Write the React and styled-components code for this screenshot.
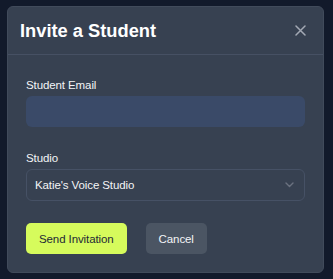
import React from "react";
import styled, { createGlobalStyle } from "styled-components";

const GlobalStyle = createGlobalStyle`
  html, body {
    margin: 0;
    padding: 0;
    background: #121a2b;
    font-family: "Liberation Sans", Arial, sans-serif;
  }
`;

const Page = styled.div`
  padding: 6px 9px 6px 7px;
`;

const Modal = styled.div`
  width: 317px;
  box-sizing: border-box;
  background: #374151;
  border: 1px solid #414b5b;
  border-radius: 6px;
  color: #f3f4f6;
`;

const Header = styled.div`
  height: 48px;
  box-sizing: border-box;
  display: flex;
  align-items: center;
  justify-content: space-between;
  padding: 0 17px 0 12px;
  border-bottom: 1px solid #465063;
`;

const Title = styled.h2`
  margin: 0;
  font-size: 18.3px;
  font-weight: 700;
  color: #ffffff;
`;

const CloseButton = styled.button`
  border: 0;
  background: none;
  padding: 0;
  width: 12px;
  height: 12px;
  display: flex;
  align-items: center;
  justify-content: center;
  cursor: pointer;
`;

const Body = styled.div`
  padding: 22px 18px 18px 18px;
`;

const Field = styled.div`
  margin-bottom: ${(p) => p.gap || 0}px;
`;

const Label = styled.label`
  display: block;
  font-size: 11.5px;
  line-height: 16px;
  color: #f3f4f6;
  margin-bottom: 3px;
  letter-spacing: -0.1px;
`;

const Input = styled.input`
  display: block;
  width: 100%;
  box-sizing: border-box;
  height: 31px;
  border: 0;
  border-radius: 6px;
  background: #3a4a68;
  color: #fff;
  outline: none;
`;

const SelectBox = styled.div`
  height: 32px;
  box-sizing: border-box;
  border: 1px solid #465165;
  border-radius: 6px;
  display: flex;
  align-items: center;
  justify-content: space-between;
  padding: 0 10px 0 8px;
  font-size: 11.5px;
  letter-spacing: -0.1px;
  color: #f3f4f6;
`;

const Actions = styled.div`
  display: flex;
  gap: 19px;
`;

const Button = styled.button`
  height: 31px;
  padding: 0 13px;
  border: 0;
  border-radius: 5px;
  font-family: inherit;
  font-size: 11.5px;
  letter-spacing: -0.1px;
  cursor: pointer;
  background: ${(p) => (p.primary ? "#d6fb5c" : "#4b5563")};
  color: ${(p) => (p.primary ? "#1f2937" : "#f3f4f6")};
`;

function App() {
  return (
    <Page>
      <GlobalStyle />
      <Modal>
        <Header>
          <Title>Invite a Student</Title>
          <CloseButton aria-label="Close">
            <svg width="11" height="11" viewBox="0 0 11 11">
              <path d="M1 1L10 10M10 1L1 10" stroke="#a3a9b4" strokeWidth="1.5" strokeLinecap="round" />
            </svg>
          </CloseButton>
        </Header>
        <Body>
          <Field gap={23}>
            <Label>Student Email</Label>
            <Input type="email" />
          </Field>
          <Field gap={22}>
            <Label>Studio</Label>
            <SelectBox>
              <span>Katie's Voice Studio</span>
              <svg width="9" height="6" viewBox="0 0 9 6">
                <path d="M1 1L4.5 4.5L8 1" stroke="#6b7280" strokeWidth="1.4" fill="none" strokeLinecap="round" strokeLinejoin="round" />
              </svg>
            </SelectBox>
          </Field>
          <Actions>
            <Button primary>Send Invitation</Button>
            <Button>Cancel</Button>
          </Actions>
        </Body>
      </Modal>
    </Page>
  );
}

export default App;
